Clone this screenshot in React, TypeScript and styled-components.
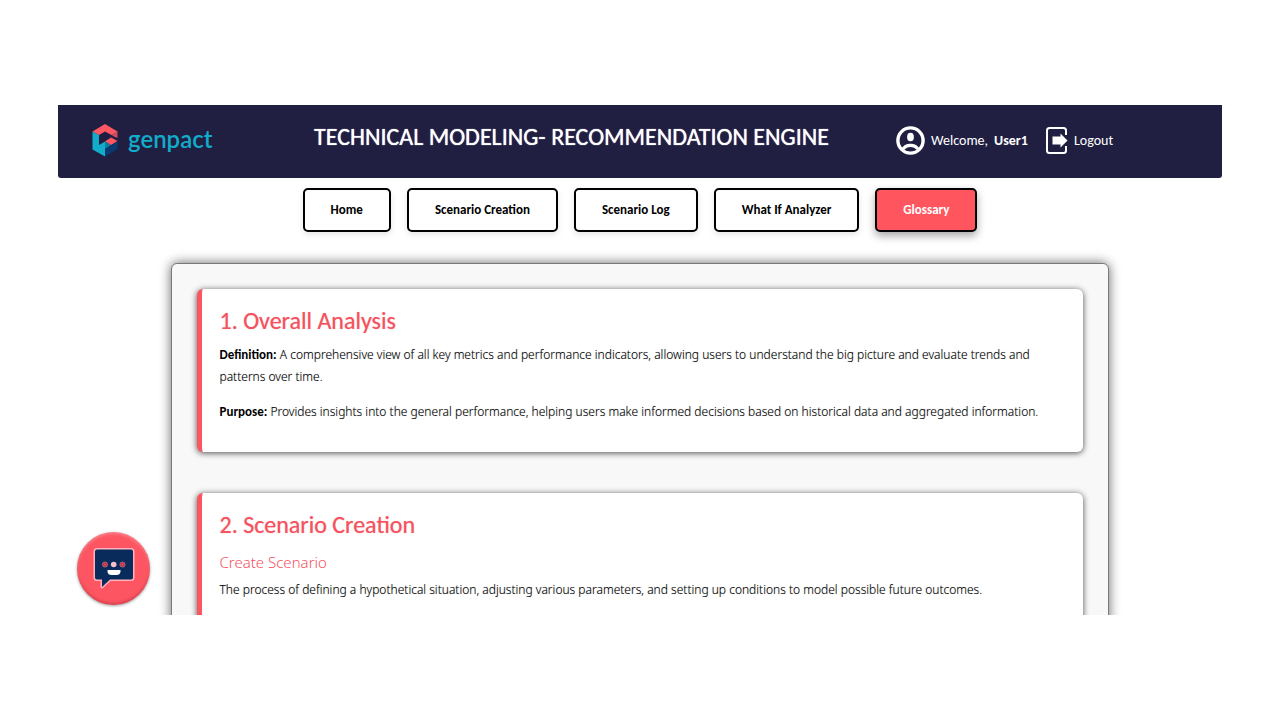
import React from "react";
import styled, { createGlobalStyle } from "styled-components";

const displayFont = "Carlito, Calibri, Lato, sans-serif";
const lightFont = '"Noto Sans", "Open Sans", sans-serif';

const GlobalStyle = createGlobalStyle`
  * { box-sizing: border-box; }
  body {
    margin: 0;
    background: #fff;
    color: #000;
    font-family: ${displayFont};
    font-size: 13px;
  }
`;

const Page = styled.div`
  height: 100vh;
  padding: 105px 58px;
`;

const Viewport = styled.div`
  height: 100%;
  overflow: hidden;
`;

const Header = styled.header`
  display: grid;
  grid-template-columns: 22fr 50fr 28fr;
  align-items: center;
  height: 73px;
  padding-bottom: 2px;
  background: #201f42;
  color: #fff;
  border-radius: 0 0 3px 3px;
`;

const Brand = styled.a`
  display: flex;
  align-items: center;
  gap: 10px;
  padding: 0 0 2px 34px;
  color: #12abc9;
  font-family: Lato, sans-serif;
  font-size: 24px;
  line-height: 28px;
  font-weight: 600;
  text-decoration: none;
`;

const BrandName = styled.span`
  padding-bottom: 2px;
`;

const Title = styled.h1`
  margin: 0;
  padding-bottom: 8px;
  font-size: 24px;
  line-height: 28px;
  font-weight: 400;
  text-shadow: 0 0 1px #fff;
  white-space: nowrap;
`;

const Account = styled.div`
  display: flex;
  align-items: center;
  gap: 18px;
  font-size: 14px;
  white-space: nowrap;
`;

const AccountItem = styled.div`
  display: flex;
  align-items: center;
  gap: 6px;
`;

const LogoutButton = styled.button`
  display: flex;
  align-items: center;
  gap: 6px;
  padding: 0;
  border: 0;
  background: none;
  color: inherit;
  font: inherit;
`;

const Nav = styled.nav`
  display: flex;
  justify-content: center;
  gap: 16px;
  padding: 10px 0 31px;
`;

const NavButton = styled.button<{ $active?: boolean }>`
  height: 44px;
  padding: 0 26px 2px;
  border: 2px solid #000;
  border-radius: 5px;
  background: ${(p) => (p.$active ? "#ff555f" : "#fff")};
  color: ${(p) => (p.$active ? "#fff" : "#000")};
  box-shadow: ${(p) => (p.$active ? "0 4px 8px rgba(0, 0, 0, 0.35)" : "0 3px 6px rgba(0, 0, 0, 0.1)")};
  font: inherit;
  font-weight: 700;
`;

const Panel = styled.main`
  display: flex;
  flex-direction: column;
  gap: 41px;
  width: 80.5%;
  margin: 0 auto;
  padding: 25px;
  border: 1px solid #77787c;
  border-radius: 6px;
  background: #f8f8f8;
  box-shadow: 0 0 12px rgba(0, 0, 0, 0.6);
`;

const Card = styled.section`
  padding: 16px 32px 16px 17px;
  border-left: 5px solid #fb5562;
  border-radius: 6px;
  background: #fff;
  box-shadow: 0 1px 6px rgba(0, 0, 0, 0.7);
`;

const CardTitle = styled.h2`
  margin: 0 0 7px;
  color: #f5525f;
  font-size: 24px;
  line-height: 32px;
  font-weight: 400;
  text-shadow: 0 0 1px rgba(245, 82, 95, 0.6);
`;

const TermTitle = styled.h3`
  margin: 0 0 2px;
  color: #f5525f;
  font-family: ${lightFont};
  font-size: 15px;
  line-height: 29px;
  font-weight: 300;
`;

const Text = styled.p`
  margin: 0 0 13px;
  font-family: ${lightFont};
  font-size: 12px;
  font-weight: 300;
  line-height: 22px;
  text-shadow: 0 0 1px rgba(0, 0, 0, 0.3);
`;

const Label = styled.strong`
  font-family: ${displayFont};
  font-size: 13px;
  font-weight: 700;
  text-shadow: none;
`;

const ChatButton = styled.button`
  position: fixed;
  left: 77px;
  bottom: 115px;
  width: 73px;
  height: 73px;
  padding: 0;
  border: 0;
  border-radius: 50%;
  background: #fd5662;
  box-shadow: 0 1px 3px rgba(0, 0, 0, 0.4), inset 0 2px 3px rgba(255, 255, 255, 0.25), inset 0 -2px 3px rgba(120, 0, 20, 0.25);
`;

const GenpactMark = () => (
  <svg width="26" height="34" viewBox="0 0 26 34" aria-hidden="true">
    <path d="M0.5 8.500 13 1 25.500 8.500 19.500 12 13 8.500 7 12Z" fill="#ff5862" />
    <path d="M0.500 8.500 7 12V22L13 18.500V33.500L0.500 26.500Z" fill="#12abc9" />
    <path d="M13 18.500 19 14.500 25.500 18 19 22Z" fill="#ff5862" />
    <path d="M13 18.500 19 22 13 26Z" fill="#0c7fa8" />
    <path d="M13 26 25.500 18.500V26L13 33.500Z" fill="#063a70" />
    <path d="M19.500 12 25.500 8.500V15L22 13.500Z" fill="#ff5862" opacity="0.8" />
  </svg>
);

const UserIcon = () => (
  <svg width="29" height="29" viewBox="0 0 29 29" fill="none" aria-hidden="true">
    <circle cx="14.500" cy="14.500" r="12.600" stroke="#fff" strokeWidth="3.400" />
    <ellipse cx="14.500" cy="11" rx="3.400" ry="4.300" fill="#fff" />
    <path d="M5.500 22.500C8 18.700 11 17.700 14.500 17.700s6.500 1 9 4.800l-2 2C19 22 17 21 14.500 21s-4.500 1-7 3.500Z" fill="#fff" />
  </svg>
);

const LogoutIcon = () => (
  <svg width="22" height="27" viewBox="0 0 22 27" fill="none" aria-hidden="true">
    <path d="M20 8V3.500Q20 1 17.500 1H3.500Q1 1 1 3.500v20Q1 26 3.500 26h14q2.500 0 2.500-2.500V19" stroke="#fff" strokeWidth="2" />
    <path d="M6.500 9.500h8V6.500l7 7-7 7v-3h-8Z" fill="#fff" />
  </svg>
);

const BotIcon = () => (
  <svg width="73" height="73" viewBox="0 0 73 73" aria-hidden="true">
    <path d="M20 17.500h34q2 0 2 2v26q0 2-2 2H33L25 55V47.500H20q-2 0-2-2v-26q0-2 2-2Z" fill="#ffb3bd" stroke="#ffb3bd" strokeWidth="3" strokeLinejoin="round" />
    <path d="M20 17.500h34q2 0 2 2v26q0 2-2 2H33L25 55V47.500H20q-2 0-2-2v-26q0-2 2-2Z" fill="#082b5c" />
    <circle cx="28" cy="32.500" r="2.600" fill="#b33247" stroke="#d8808b" strokeWidth="0.600" />
    <circle cx="45.500" cy="32.500" r="2.600" fill="#b33247" stroke="#d8808b" strokeWidth="0.600" />
    <circle cx="28" cy="32.500" r="0.800" fill="#fd5662" />
    <circle cx="45.500" cy="32.500" r="0.800" fill="#fd5662" />
    <circle cx="36.700" cy="32.500" r="2.800" fill="#f9bfcb" />
    <path d="M30.500 38h13v1q0 4-4 4h-5q-4 0-4-4Z" fill="#fff" />
  </svg>
);

const pages = ["Home", "Scenario Creation", "Scenario Log", "What If Analyzer", "Glossary"];

export default function App() {
  return (
    <Page>
      <GlobalStyle />
      <Viewport>
        <Header>
          <Brand href="#">
            <GenpactMark />
            <BrandName>genpact</BrandName>
          </Brand>
          <Title>TECHNICAL MODELING- RECOMMENDATION ENGINE</Title>
          <Account>
            <AccountItem>
              <UserIcon />
              <span>Welcome,</span>
              <strong>User1</strong>
            </AccountItem>
            <LogoutButton type="button">
              <LogoutIcon />
              Logout
            </LogoutButton>
          </Account>
        </Header>
        <Nav>
          {pages.map((page) => (
            <NavButton key={page} type="button" $active={page === "Glossary"}>
              {page}
            </NavButton>
          ))}
        </Nav>
        <Panel>
          <Card>
            <CardTitle>1. Overall Analysis</CardTitle>
            <Text>
              <Label>Definition:</Label> A comprehensive view of all key metrics and performance indicators, allowing
              users to understand the big picture and evaluate trends and patterns over time.
            </Text>
            <Text>
              <Label>Purpose:</Label> Provides insights into the general performance, helping users make informed
              decisions based on historical data and aggregated information.
            </Text>
          </Card>
          <Card>
            <CardTitle>2. Scenario Creation</CardTitle>
            <TermTitle>Create Scenario</TermTitle>
            <Text>
              The process of defining a hypothetical situation, adjusting various parameters, and setting up conditions
              to model possible future outcomes.
            </Text>
          </Card>
        </Panel>
      </Viewport>
      <ChatButton type="button" aria-label="Open chat assistant">
        <BotIcon />
      </ChatButton>
    </Page>
  );
}
